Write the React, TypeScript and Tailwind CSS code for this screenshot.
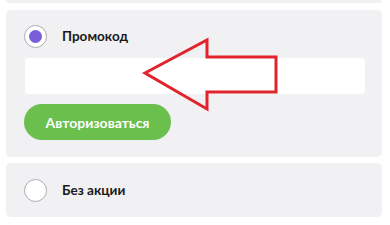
function Radio({ checked }: { checked?: boolean }) {
  return (
    <span className="flex h-[23px] w-[23px] shrink-0 items-center justify-center rounded-full border border-[#acacb0] bg-white">
      {checked && <span className="h-[13px] w-[13px] rounded-full bg-[#7a5dd8]" />}
    </span>
  );
}

export default function App() {
  return (
    <div className="relative h-[225px] w-[390px] overflow-hidden bg-white font-['Lato',sans-serif]">
      <div className="flex w-[376px] flex-col pl-[6px] box-content">
        {/* previous card edge */}
        <div className="h-[3px] rounded-b-[5px] bg-[#f1f1f3]" />

        {/* promo code option */}
        <div className="mt-[7px] flex h-[147px] flex-col rounded-[5px] bg-[#f1f1f3] px-[18px] pt-[15px]">
          <label className="flex items-center gap-[15px]">
            <Radio checked />
            <span className="text-[13.5px] font-bold text-[#1a1a1a]">Промокод</span>
          </label>
          <input className="ml-px mt-[10px] h-[36px] w-[340px] rounded-[3px] bg-white px-3 text-[13px] outline-none" />
          <button className="mt-[10px] flex h-[36px] w-[147px] items-center justify-center rounded-full bg-[#6bbf4c] text-[14px] font-bold text-white">
            Авторизоваться
          </button>
        </div>

        {/* no promo */}
        <div className="mt-[6px] flex h-[54px] items-center gap-[15px] rounded-[5px] bg-[#f1f1f3] px-[18px]">
          <Radio />
          <span className="text-[13.5px] font-bold text-[#1a1a1a]">Без акции</span>
        </div>
      </div>

      {/* annotation arrow */}
      <svg className="absolute left-0 top-0" width="390" height="225" viewBox="0 0 390 225">
        <polygon
          points="145,73 207,40 207,57 276,57 276,92 207,92 207,109"
          fill="none"
          stroke="#e1242c"
          strokeWidth="3"
          strokeLinejoin="miter"
        />
      </svg>
    </div>
  );
}
